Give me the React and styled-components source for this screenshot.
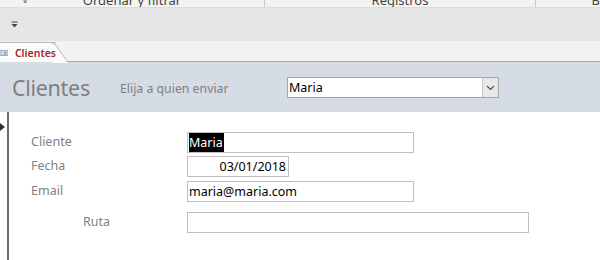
import React from 'react';
import styled, { createGlobalStyle } from 'styled-components';

const GlobalStyle = createGlobalStyle`
  html, body {
    margin: 0;
    padding: 0;
    background: #ffffff;
    overflow: hidden;
  }
  body {
    font-family: "Noto Sans", "Open Sans", sans-serif;
  }
`;

const App = () => {
    return (
        <Page>
            <GlobalStyle />
            <GroupStrip>
                <Launcher>↘</Launcher>
                <GroupLabel $width={265}>Ordenar y filtrar</GroupLabel>
                <GroupLabel $width={271}>Registros</GroupLabel>
                <GroupLabel $width={64} $align='right'>B</GroupLabel>
            </GroupStrip>
            <QuickBar>
                <svg width='7' height='7' viewBox='0 0 7 7'>
                    <rect x='0.5' y='0.5' width='6' height='1' fill='#444' />
                    <path d='M0.5 3 L6.5 3 L3.5 6.5 Z' fill='#444' />
                </svg>
            </QuickBar>
            <TabBar>
                <Tab>
                    <svg width='12' height='8' viewBox='0 0 12 8'>
                        <rect x='0' y='0' width='12' height='8' fill='#e9eef6' stroke='#7a8fb0' strokeWidth='1' />
                        <rect x='1' y='2' width='4' height='1' fill='#7a8fb0' />
                        <rect x='1' y='5' width='4' height='1' fill='#7a8fb0' />
                        <rect x='6' y='2' width='4' height='2' fill='#7a8fb0' />
                        <rect x='6' y='5' width='4' height='2' fill='#7a8fb0' />
                    </svg>
                    <TabText>Clientes</TabText>
                </Tab>
            </TabBar>
            <FormHeader>
                <FormTitle>Clientes</FormTitle>
                <HeaderLabel>Elija a quien enviar</HeaderLabel>
                <Combo>
                    <ComboValue>Maria</ComboValue>
                    <ComboButton>
                        <svg width='9' height='6' viewBox='0 0 9 6'>
                            <path d='M1 1 L4.5 4.5 L8 1' fill='none' stroke='#555' strokeWidth='1.2' />
                        </svg>
                    </ComboButton>
                </Combo>
            </FormHeader>
            <Detail>
                <RecordSelector>
                    <svg width='6' height='8' viewBox='0 0 6 8'>
                        <path d='M0 0 L5 4 L0 8 Z' fill='#333' />
                    </svg>
                </RecordSelector>
                <Fields>
                    <Row $gap={0}>
                        <Label $indent={22}>Cliente</Label>
                        <Field $width={227}><Selected>Maria</Selected></Field>
                    </Row>
                    <Row $gap={3}>
                        <Label $indent={22}>Fecha</Label>
                        <Field $width={102} $align='right'>03/01/2018</Field>
                    </Row>
                    <Row $gap={4}>
                        <Label $indent={22}>Email</Label>
                        <Field $width={227}>maria@maria.com</Field>
                    </Row>
                    <Row $gap={10}>
                        <Label $indent={74}>Ruta</Label>
                        <Field $width={342} />
                    </Row>
                </Fields>
            </Detail>
        </Page>
    );
};

export default App;


const Page = styled.div`
width: 600px;
height: 260px;
display: flex;
flex-direction: column;
overflow: hidden;
`;
const GroupStrip = styled.div`
height: 7px;
background: #f3f3f3;
border-bottom: 1px solid #dcdcdc;
display: flex;
position: relative;
overflow: hidden;
`;
const Launcher = styled.span`
position: absolute;
left: 20px;
top: -7px;
font-size: 9px;
color: #666;
`;
const GroupLabel = styled.div`
width: ${p => p.$width}px;
flex: none;
box-sizing: border-box;
border-right: 1px solid #c8c8c8;
text-align: ${p => p.$align || 'center'};
font-family: "Noto Sans", sans-serif;
font-size: 13px;
line-height: 0px;
color: #444;
&:last-child { border-right: none; }
`;
const QuickBar = styled.div`
height: 33px;
background: #e6e6e6;
display: flex;
align-items: center;
padding-left: 11px;
`;
const TabBar = styled.div`
height: 20px;
background: #f3f2f1;
border-bottom: 1px solid #a7a7a7;
display: flex;
align-items: flex-end;
`;
const Tab = styled.div`
position: relative;
height: 20px;
width: 56px;
margin-bottom: -1px;
box-sizing: border-box;
display: flex;
align-items: center;
gap: 7px;
background: #fbfbfb;
border-top: 1px solid #b9b9b9;

&::after {
    content: '';
    position: absolute;
    top: -1px;
    right: -13px;
    width: 16px;
    height: 21px;
    background: #fbfbfb;
    border-top: 1px solid #b9b9b9;
    border-right: 1px solid #9a9a9a;
    border-top-right-radius: 5px;
    transform: skewX(35deg);
    transform-origin: bottom left;
    box-sizing: border-box;
}
`;
const TabText = styled.span`
position: relative;
z-index: 1;
font-family: "Noto Sans", sans-serif;
font-size: 10.5px;
font-weight: 600;
color: #a4262c;
`;
const FormHeader = styled.div`
height: 50px;
background: #d6dce5;
display: flex;
align-items: center;
`;
const FormTitle = styled.div`
margin-left: 12px;
width: 108px;
font-family: "Noto Sans", sans-serif;
font-size: 21.5px;
color: #7f7f7f;
letter-spacing: -0.3px;
`;
const HeaderLabel = styled.div`
width: 167px;
font-family: "Noto Sans", sans-serif;
font-size: 12.3px;
color: #7f7f7f;
margin-top: 2px;
`;
const Combo = styled.div`
width: 212px;
height: 21px;
box-sizing: border-box;
border: 1px solid #a6a6a6;
background: #fff;
display: flex;
margin-top: 1px;
`;
const ComboValue = styled.div`
flex: 1;
padding-left: 1px;
font-family: "Noto Sans", sans-serif;
font-size: 12.5px;
line-height: 19px;
color: #000;
`;
const ComboButton = styled.div`
width: 15px;
border-left: 1px solid #c6c6c6;
background: #e8e8e8;
display: flex;
align-items: center;
justify-content: center;
`;
const Detail = styled.div`
flex: 1;
display: flex;
`;
const RecordSelector = styled.div`
width: 7px;
border-right: 2px solid #6b6b6b;
padding-top: 2px;
`;
const Fields = styled.div`
padding-top: 20px;
display: flex;
flex-direction: column;
`;
const Row = styled.div`
display: flex;
align-items: center;
margin-top: ${p => p.$gap}px;
`;
const Label = styled.div`
width: ${p => 178 - p.$indent}px;
padding-left: ${p => p.$indent}px;
margin-top: -2px;
font-family: "Noto Sans", sans-serif;
font-size: 12.5px;
color: #7f7f7f;
`;
const Field = styled.div`
width: ${p => p.$width}px;
height: 21px;
box-sizing: border-box;
border: 1px solid #bfbfbf;
padding: 0 2px 0 1px;
text-align: ${p => p.$align || 'left'};
font-family: "Noto Sans", sans-serif;
font-size: 12.5px;
line-height: 19px;
color: #000;
`;
const Selected = styled.span`
background: #000;
color: #fff;
padding: 1px 1px 1px 0;
`;
